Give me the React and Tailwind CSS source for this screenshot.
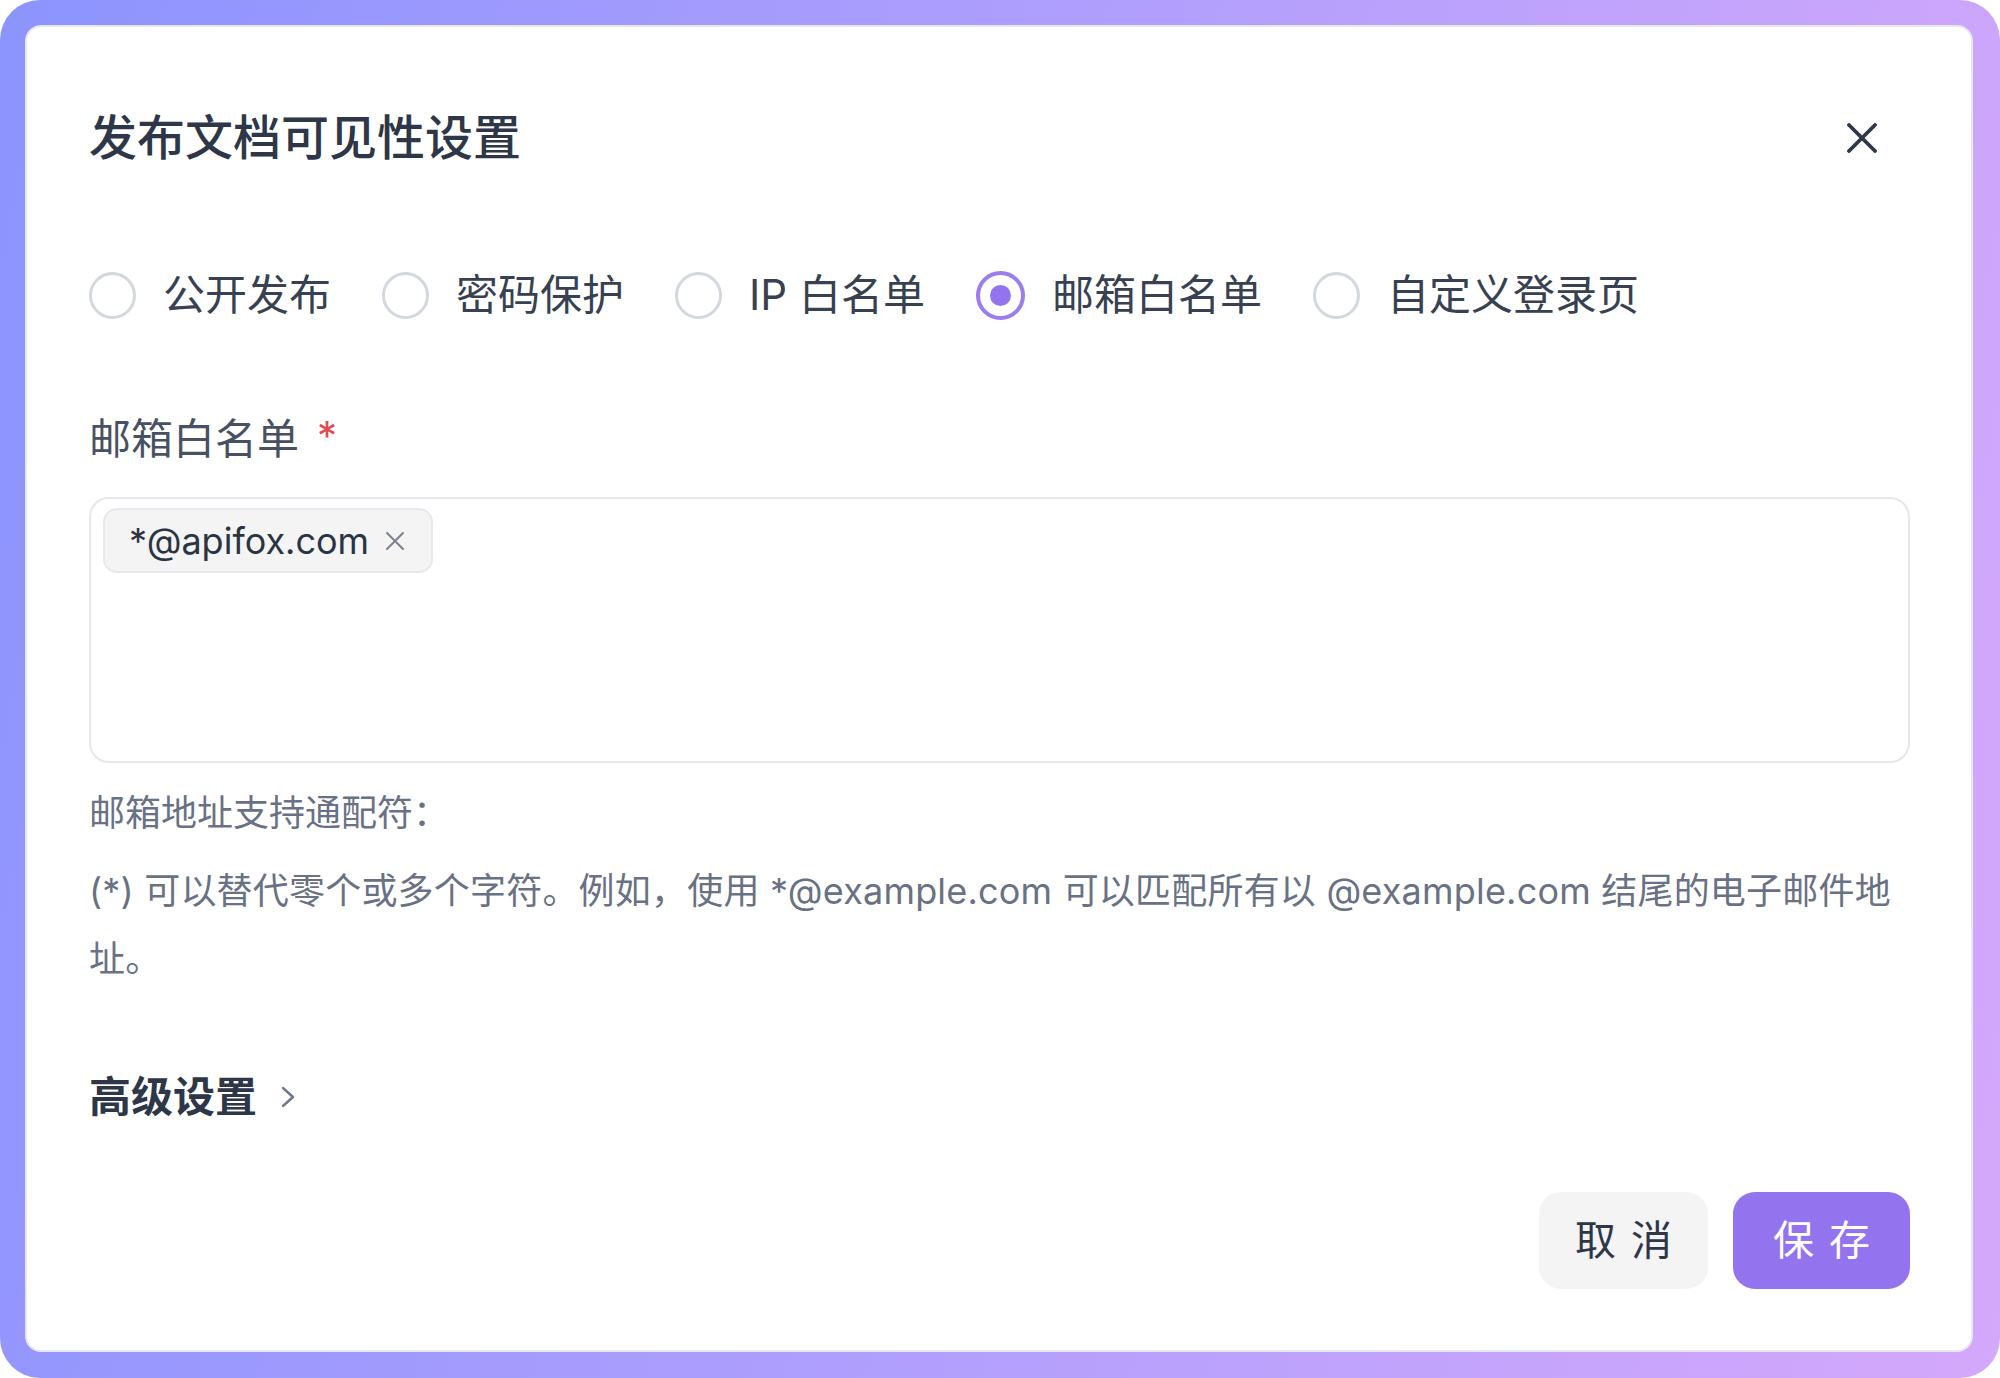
import React from "react";

const options = [
  { label: "公开发布" },
  { label: "密码保护" },
  { label: "IP 白名单" },
  { label: "邮箱白名单", checked: true },
  { label: "自定义登录页" },
];

function Radio({ label, checked }) {
  return (
    <label className="flex items-center gap-[27px] cursor-pointer">
      {checked ? (
        <span className="w-[49px] h-[49px] rounded-full border-[4px] border-[#9c7cf1] flex items-center justify-center">
          <span className="w-[21px] h-[21px] rounded-full bg-[#9473ee]" />
        </span>
      ) : (
        <span className="w-[47px] h-[47px] rounded-full border-[3px] border-[#d3d7de]" />
      )}
      <span className="text-[42px] leading-[50px] text-[#374152]">{label}</span>
    </label>
  );
}

export default function App() {
  return (
    <div className="w-[2000px] h-[1378px] bg-white">
      <div className="w-full h-full rounded-[40px] bg-linear-100 from-[#8c94fe] to-[#d4a8fb] pl-[25px] pr-[27px] pt-[25px] pb-[26px] font-['Inter','Noto_Sans_CJK_SC',sans-serif]">
        <div className="h-full bg-white rounded-[16px] border-2 border-[#e7e8ee] pl-[62px] pr-[61px] pt-[81px] flex flex-col">
          <div className="flex items-center justify-between h-[60px]">
            <h1 className="text-[48px] leading-[60px] font-medium text-[#2e3748]">
              发布文档可见性设置
            </h1>
            <button className="mr-[33px] w-[30px] h-[30px] text-[#2e3748]">
              <svg width="30" height="30" viewBox="0 0 30 30" fill="none">
                <path
                  d="M2 2L28 28M28 2L2 28"
                  stroke="currentColor"
                  strokeWidth="3.8"
                  strokeLinecap="round"
                />
              </svg>
            </button>
          </div>

          <div className="mt-[103px] h-[48px] flex items-center gap-[51px]">
            {options.map((o) => (
              <Radio key={o.label} label={o.label} checked={o.checked} />
            ))}
          </div>

          <div className="mt-[95px] h-[50px] flex items-center text-[42px] leading-[50px] text-[#485163]">
            <span>邮箱白名单</span>
            <span className="ml-[18px] text-[40px] text-[#e5484d] self-start leading-[44px]">*</span>
          </div>

          <div className="mt-[33px] h-[266px] rounded-[20px] border-2 border-[#e6e7ec] pl-[12px] pt-[9px]">
            <span className="inline-flex items-center h-[65px] rounded-[14px] border-2 border-[#e8e9ed] bg-[#f4f4f5] pl-[24px] pr-[26px] gap-[16px]">
              <span className="text-[36px] leading-[44px] text-[#2b3442]">*@apifox.com</span>
              <svg width="20" height="20" viewBox="0 0 20 20" fill="none" className="text-[#7b8190]">
                <path d="M2 2L18 18M18 2L2 18" stroke="currentColor" strokeWidth="2" strokeLinecap="round" />
              </svg>
            </span>
          </div>

          <p className="mt-[16px] text-[36px] leading-[68px] text-[#697184]">邮箱地址支持通配符：</p>
          <p className="mt-[10px] text-[36px] leading-[68px] text-[#697184] whitespace-nowrap tracking-[0.2px]">
            (*) 可以替代零个或多个字符。例如，使用 *@example.com 可以匹配所有以 @example.com 结尾的电子邮件地
            <br />
            址。
          </p>

          <div className="mt-[76px] h-[56px] flex items-center gap-[24px]">
            <span className="text-[42px] leading-[56px] font-semibold text-[#2e3748]">高级设置</span>
            <svg width="14" height="22" viewBox="0 0 14 22" fill="none" className="text-[#6f7686]">
              <path d="M2 2L12 11L2 20" stroke="currentColor" strokeWidth="2.4" strokeLinecap="round" strokeLinejoin="round" />
            </svg>
          </div>

          <div className="mt-[67px] flex justify-end gap-[25px]">
            <button className="w-[169px] h-[97px] rounded-[22px] bg-[#f4f4f5] flex items-center justify-center gap-[15px] text-[41px] text-[#2e3748]">
              <span>取</span>
              <span>消</span>
            </button>
            <button className="w-[177px] h-[97px] rounded-[22px] bg-[#9474ee] flex items-center justify-center gap-[15px] text-[41px] text-white">
              <span>保</span>
              <span>存</span>
            </button>
          </div>
        </div>
      </div>
    </div>
  );
}
